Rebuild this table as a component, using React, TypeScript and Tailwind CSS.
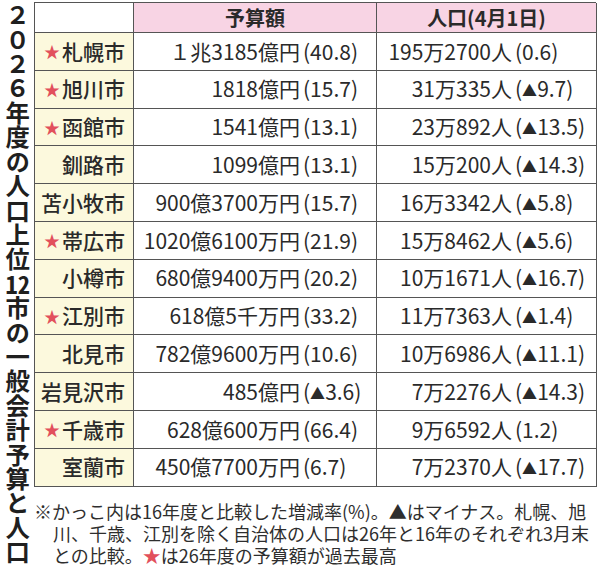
import React from 'react';

interface Row {
  city: string;
  star: boolean;
  budget: string;
  budgetRate: string;
  pop: string;
  popRate: string;
}

const rows: Row[] = [
  { city: '札幌市', star: true, budget: '１兆3185億円', budgetRate: '40.8', pop: '195万2700人', popRate: '0.6' },
  { city: '旭川市', star: true, budget: '1818億円', budgetRate: '15.7', pop: '31万335人', popRate: '▲9.7' },
  { city: '函館市', star: true, budget: '1541億円', budgetRate: '13.1', pop: '23万892人', popRate: '▲13.5' },
  { city: '釧路市', star: false, budget: '1099億円', budgetRate: '13.1', pop: '15万200人', popRate: '▲14.3' },
  { city: '苫小牧市', star: false, budget: '900億3700万円', budgetRate: '15.7', pop: '16万3342人', popRate: '▲5.8' },
  { city: '帯広市', star: true, budget: '1020億6100万円', budgetRate: '21.9', pop: '15万8462人', popRate: '▲5.6' },
  { city: '小樽市', star: false, budget: '680億9400万円', budgetRate: '20.2', pop: '10万1671人', popRate: '▲16.7' },
  { city: '江別市', star: true, budget: '618億5千万円', budgetRate: '33.2', pop: '11万7363人', popRate: '▲1.4' },
  { city: '北見市', star: false, budget: '782億9600万円', budgetRate: '10.6', pop: '10万6986人', popRate: '▲11.1' },
  { city: '岩見沢市', star: false, budget: '485億円', budgetRate: '▲3.6', pop: '7万2276人', popRate: '▲14.3' },
  { city: '千歳市', star: true, budget: '628億600万円', budgetRate: '66.4', pop: '9万6592人', popRate: '1.2' },
  { city: '室蘭市', star: false, budget: '450億7700万円', budgetRate: '6.7', pop: '7万2370人', popRate: '▲17.7' },
];

function Rate({ value }: { value: string }) {
  const neg = value.startsWith('▲');
  const num = neg ? value.slice(1) : value;
  return (
    <span className="whitespace-nowrap">
      (
      {neg && <span className="text-[15px] relative top-[-1px]">▲</span>}
      {num})
    </span>
  );
}

export default function App() {
  return (
    <div className="w-[600px] h-[570px] bg-white flex text-[#2a2a2a] font-['Noto_Sans_CJK_JP',sans-serif] overflow-hidden">
      {/* Vertical title */}
      <div className="w-[34px] flex justify-center pt-[3px]">
        <div className="[writing-mode:vertical-rl] text-[24.4px] leading-none font-bold text-[#1f1f1f]">
          ２０２６年度の人口上位<span className="[text-combine-upright:all]">12</span>市の一般会計予算と人口
        </div>
      </div>

      <div className="flex flex-col pt-[2px]">
        {/* Table */}
        <div className="grid grid-cols-[99px_243px_220px] border-l border-t border-[#555] w-[562px] text-[21px]">
          <div className="h-[30px] border-r border-b border-[#555] bg-white" />
          <div className="h-[30px] border-r border-b border-[#555] bg-[#f8d4e4] flex items-center justify-center font-bold text-[20px]">
            予算額
          </div>
          <div className="h-[30px] border-r border-b border-[#555] bg-[#f8d4e4] flex items-center justify-center font-bold text-[20px]">
            人口(4月1日)
          </div>

          {rows.map((r) => (
            <React.Fragment key={r.city}>
              <div className="h-[37.8px] border-r border-b border-[#555] bg-[#fcf9dd] flex items-center justify-end pr-[8px] font-medium">
                {r.star && <span className="text-[16px] text-[#e2505c] mr-[2px]">★</span>}
                {r.city}
              </div>
              <div className="h-[37.8px] border-r border-b border-[#555] flex items-center">
                <span className="w-[166px] text-right whitespace-nowrap">{r.budget}</span>
                <span className="pl-[3px]">
                  <Rate value={r.budgetRate} />
                </span>
              </div>
              <div className="h-[37.8px] border-r border-b border-[#555] flex items-center">
                <span className="w-[135px] text-right whitespace-nowrap">{r.pop}</span>
                <span className="pl-[3px]">
                  <Rate value={r.popRate} />
                </span>
              </div>
            </React.Fragment>
          ))}
        </div>

        {/* Footnote */}
        <div className="mt-[13px] text-[18px] leading-[22px] text-[#2e2e2e] whitespace-nowrap">
          <div>※かっこ内は16年度と比較した増減率(%)。▲はマイナス。札幌、旭</div>
          <div className="pl-[19px]">川、千歳、江別を除く自治体の人口は26年と16年のそれぞれ3月末</div>
          <div className="pl-[19px]">
            との比較。<span className="text-[#e2505c]">★</span>は26年度の予算額が過去最高
          </div>
        </div>
      </div>
    </div>
  );
}
